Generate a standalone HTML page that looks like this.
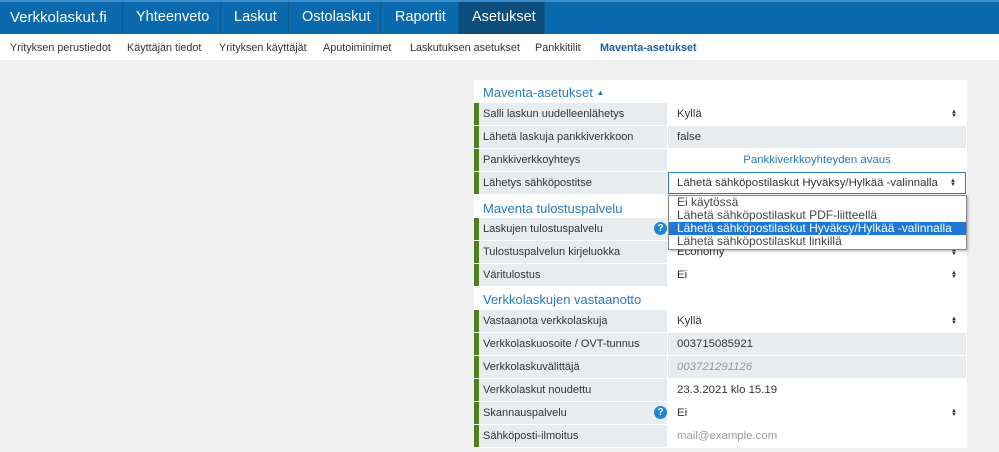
<!DOCTYPE html>
<html><head><meta charset="utf-8"><style>
*{box-sizing:border-box;margin:0;padding:0}
body{width:999px;height:452px;overflow:hidden;background:#f0f0f0;font-family:"Liberation Sans",Arial,sans-serif;position:relative}
.nav{position:absolute;left:0;top:0;width:999px;height:34px;background:#0a6aad;border-top:2px solid #3a8cc8}
.nav div{position:absolute;top:0;height:32px;line-height:31px;color:#fff;font-size:14.5px;border-right:1px solid #0a5a94}
.sub{position:absolute;left:0;top:34px;width:999px;height:26px;background:#fff;font-size:10.8px;color:#333}
.sub span{position:absolute;top:8px}
.panel{position:absolute;left:474px;top:80px;width:493px;height:368px;background:#fff}
.row{position:absolute;left:0;width:493px;height:22px;font-size:11.4px;color:#333}
.row .l{position:absolute;left:0;top:0;width:193px;height:22px;background:#e9ecef;border-left:5px solid #4e7f1d;padding-left:4px;line-height:22px;font-size:11px}
.row .v{position:absolute;left:194px;top:0;width:298px;height:22px;background:#fff;padding-left:9px;line-height:22px}
.row .v.g{background:#e9ecef}
.arr{position:absolute;right:9px;top:7px;font-size:6px;line-height:4px;color:#333}
.h{position:absolute;left:9px;font-size:13px;color:#2a7ab5}
.q{position:absolute;left:175px;top:4px;width:13px;height:13px;border-radius:50%;background:#1a87d0;color:#fff;font-size:10px;font-weight:bold;text-align:center;line-height:13px}
.dd{position:absolute;left:668px;top:195px;width:299px;height:55px;background:#fff;border:1px solid #888;font-size:12px;color:#444;box-shadow:1px 1px 3px rgba(0,0,0,.3)}
.dd div{height:13px;line-height:13px;padding-left:8px}
.dd .s{background:#1e78d6;color:#fff}
</style></head><body>
<div class="nav">
<div style="left:0;width:123px;padding-left:10px;font-size:15px">Verkkolaskut.fi</div>
<div style="left:123px;width:98px;padding-left:13px">Yhteenveto</div>
<div style="left:221px;width:68px;padding-left:13px">Laskut</div>
<div style="left:289px;width:92px;padding-left:13px">Ostolaskut</div>
<div style="left:381px;width:78px;padding-left:14px">Raportit</div>
<div style="left:459px;width:86px;padding-left:13px;background:#0b4d7d">Asetukset</div>
</div>
<div class="sub">
<span style="left:10px">Yrityksen perustiedot</span>
<span style="left:127px">Käyttäjän tiedot</span>
<span style="left:219px">Yrityksen käyttäjät</span>
<span style="left:323px">Aputoiminimet</span>
<span style="left:410px">Laskutuksen asetukset</span>
<span style="left:535px">Pankkitilit</span>
<span style="left:600px;color:#1f5f9e;font-weight:bold">Maventa-asetukset</span>
</div>
<div class="panel">
<div class="h" style="top:5px">Maventa-asetukset <span style="font-size:8px;vertical-align:2px">&#9650;</span></div>
<div class="row" style="top:23px"><div class="l">Salli laskun uudelleenlähetys</div><div class="v">Kyllä<span class="arr">&#9650;<br>&#9660;</span></div></div>
<div class="row" style="top:46px"><div class="l">Lähetä laskuja pankkiverkkoon</div><div class="v g">false</div></div>
<div class="row" style="top:69px"><div class="l">Pankkiverkkoyhteys</div><div class="v" style="text-align:center;color:#2a7ab5;padding-left:0">Pankkiverkkoyhteyden avaus</div></div>
<div class="row" style="top:92px"><div class="l">Lähetys sähköpostitse</div><div class="v" style="border:1px solid #2a7ab5;line-height:20px;padding-left:8px">Lähetä sähköpostilaskut Hyväksy/Hylkää -valinnalla<span class="arr" style="top:6px">&#9650;<br>&#9660;</span></div></div>
<div class="h" style="top:121px">Maventa tulostuspalvelu</div>
<div class="row" style="top:138px"><div class="l">Laskujen tulostuspalvelu<span class="q">?</span></div><div class="v"></div></div>
<div class="row" style="top:161px"><div class="l">Tulostuspalvelun kirjeluokka</div><div class="v">Economy<span class="arr">&#9650;<br>&#9660;</span></div></div>
<div class="row" style="top:184px"><div class="l">Väritulostus</div><div class="v">Ei<span class="arr">&#9650;<br>&#9660;</span></div></div>
<div class="h" style="top:212px">Verkkolaskujen vastaanotto</div>
<div class="row" style="top:230px"><div class="l">Vastaanota verkkolaskuja</div><div class="v">Kyllä<span class="arr">&#9650;<br>&#9660;</span></div></div>
<div class="row" style="top:253px"><div class="l">Verkkolaskuosoite / OVT-tunnus</div><div class="v g">003715085921</div></div>
<div class="row" style="top:276px"><div class="l">Verkkolaskuvälittäjä</div><div class="v g" style="color:#999;font-style:italic">003721291126</div></div>
<div class="row" style="top:299px"><div class="l">Verkkolaskut noudettu</div><div class="v">23.3.2021 klo 15.19</div></div>
<div class="row" style="top:322px"><div class="l">Skannauspalvelu<span class="q">?</span></div><div class="v">Ei<span class="arr">&#9650;<br>&#9660;</span></div></div>
<div class="row" style="top:345px"><div class="l">Sähköposti-ilmoitus</div><div class="v" style="color:#999">mail@example.com</div></div>
</div>
<div class="dd">
<div>Ei käytössä</div>
<div>Lähetä sähköpostilaskut PDF-liitteellä</div>
<div class="s">Lähetä sähköpostilaskut Hyväksy/Hylkää -valinnalla</div>
<div>Lähetä sähköpostilaskut linkillä</div>
</div>
</body></html>
